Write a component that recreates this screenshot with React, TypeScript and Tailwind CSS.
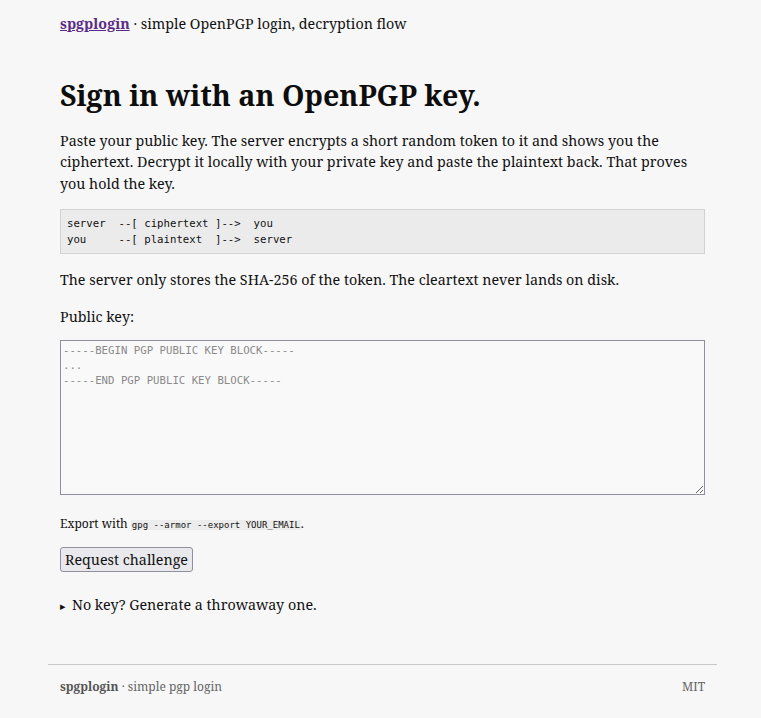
const serif = "font-['Noto_Serif',serif]";
const mono = "font-['DejaVu_Sans_Mono',monospace]";

export default function App() {
  return (
    <div className={`min-h-[718px] bg-[#f7f7f7] text-[#111] text-[14.3px] leading-[21.6px] ${serif}`}>
      <div className="ml-[48px] w-[669px]">
        <header className="px-3 pt-[13px]">
          <a href="#" className="font-bold text-[#5b2a86] underline">spgplogin</a>
          <span> · simple OpenPGP login, decryption flow</span>
        </header>

        <main className="px-3">
          <h1 className="mt-[43px] text-[28.6px] leading-[34.6px] font-bold text-[#0d0d0d]">
            Sign in with an OpenPGP key.
          </h1>

          <p className="mt-[17.6px]">
            Paste your public key. The server encrypts a short random token to it and shows you the
            ciphertext. Decrypt it locally with your private key and paste the plaintext back. That proves
            you hold the key.
          </p>

          <pre className={`mt-[14px] border border-[#d2d2d2] bg-[#ebebeb] px-[6px] pt-[6px] pb-[5px] text-[10.7px] leading-[16px] ${mono}`}>
{`server  --[ ciphertext ]-->  you
you     --[ plaintext  ]-->  server`}
          </pre>

          <p className="mt-[15px]">
            The server only stores the SHA-256 of the token. The cleartext never lands on disk.
          </p>

          <label className="mt-[15.4px] block">Public key:</label>

          <textarea
            className={`mt-[12.5px] block h-[155px] w-full border border-[#8f8f9d] bg-[#f9f9f9] px-[2px] py-[2px] text-[10.7px] leading-[15px] placeholder:text-[#8a8a8a] outline-none ${mono}`}
            placeholder={"-----BEGIN PGP PUBLIC KEY BLOCK-----\n...\n-----END PGP PUBLIC KEY BLOCK-----"}
          />

          <p className="mt-[20px] text-[12px] leading-[18px]">
            Export with{" "}
            <code className={`bg-[#ececec] px-[1px] text-[9px] ${mono}`}>gpg --armor --export YOUR_EMAIL</code>.
          </p>

          <button className="mt-[13px] block h-[25px] rounded-[3px] border border-[#8f8f9d] bg-[#e9e9ed] px-[4px] text-[14.3px] leading-[21px] text-[#111]">
            Request challenge
          </button>

          <details className="mt-[22px]">
            <summary className="cursor-pointer list-none [&::-webkit-details-marker]:hidden">
              <span className="mr-[6px] text-[11px]">▸</span>No key? Generate a throwaway one.
            </summary>
          </details>
        </main>

        <footer className="mt-[48px] border-t border-[#c8c8c8] px-3 pt-[13px] flex justify-between text-[12px] leading-[18px] text-[#666]">
          <span>
            <b className="text-[#555]">spgplogin</b> · simple pgp login
          </span>
          <span>MIT</span>
        </footer>
      </div>
    </div>
  );
}
